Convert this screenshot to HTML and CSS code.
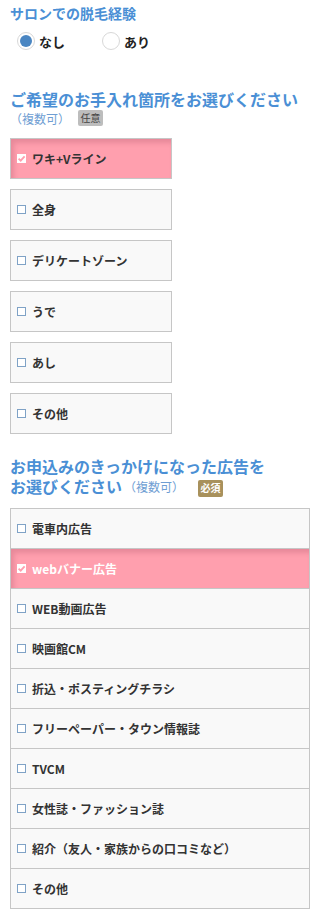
FILE: index.html
```html
<!DOCTYPE html>
<html lang="ja">
<head>
<meta charset="utf-8">
<title>form</title>
<link rel="stylesheet" href="styles.css">
</head>
<body>
<div class="page">
  <h2 class="q-title">サロンでの脱毛経験</h2>
  <div class="radios">
    <label class="radio"><span class="rcircle on"></span><span>なし</span></label>
    <label class="radio"><span class="rcircle"></span><span>あり</span></label>
  </div>

  <h2 class="big-title">ご希望のお手入れ箇所をお選びください</h2>
  <div class="sub-line"><span class="multi">（複数可）</span><span class="badge opt">任意</span></div>

  <ul class="boxes">
    <li class="box checked"><span class="cb on"><svg viewBox="0 0 9 9" width="9" height="9"><path d="M1.6 4.6 L3.7 6.6 L7.6 2.3" fill="none" stroke="#ff9fae" stroke-width="1.8"/></svg></span>ワキ+Vライン</li>
    <li class="box"><span class="cb"></span>全身</li>
    <li class="box"><span class="cb"></span>デリケートゾーン</li>
    <li class="box"><span class="cb"></span>うで</li>
    <li class="box"><span class="cb"></span>あし</li>
    <li class="box"><span class="cb"></span>その他</li>
  </ul>

  <h2 class="big-title two"><span class="tl">お申込みのきっかけになった広告を</span><span class="tl">お選びください<span class="multi inline">（複数可）</span><span class="badge req">必須</span></span></h2>

  <ul class="rows">
    <li class="row"><span class="cb"></span>電車内広告</li>
    <li class="row checked"><span class="cb on"><svg viewBox="0 0 9 9" width="9" height="9"><path d="M1.6 4.6 L3.7 6.6 L7.6 2.3" fill="none" stroke="#ff9fae" stroke-width="1.8"/></svg></span>webバナー広告</li>
    <li class="row"><span class="cb"></span>WEB動画広告</li>
    <li class="row"><span class="cb"></span>映画館CM</li>
    <li class="row"><span class="cb"></span>折込・ポスティングチラシ</li>
    <li class="row"><span class="cb"></span>フリーペーパー・タウン情報誌</li>
    <li class="row"><span class="cb"></span>TVCM</li>
    <li class="row"><span class="cb"></span>女性誌・ファッション誌</li>
    <li class="row"><span class="cb"></span>紹介（友人・家族からの口コミなど）</li>
    <li class="row"><span class="cb"></span>その他</li>
  </ul>
</div>
</body>
</html>
```
FILE: styles.css
```css
html, body {
  margin: 0;
  padding: 0;
  background: #fff;
}
body {
  font-family: "Noto Sans CJK JP", "Noto Sans", "Liberation Sans", sans-serif;
  color: #333;
}
.page {
  padding: 3px 10px 0 10px;
}
.q-title {
  margin: 0;
  font-size: 14px;
  line-height: 20px;
  font-weight: 700;
  color: #4a8fd5;
}
.radios {
  display: flex;
  align-items: center;
  height: 28px;
  margin-top: 4px;
  padding-left: 7px;
}
.radio {
  display: flex;
  align-items: center;
  gap: 4px;
  font-size: 13px;
  font-weight: 700;
  color: #222;
  width: 85px;
}
.rcircle {
  width: 18px;
  height: 18px;
  border-radius: 50%;
  border: 1px solid #d8d8d8;
  box-sizing: border-box;
  background: #fff;
  position: relative;
}
.rcircle.on::after {
  content: "";
  position: absolute;
  left: 2px;
  top: 2px;
  width: 12px;
  height: 12px;
  border-radius: 50%;
  background: #4a86c2;
}
.big-title {
  margin: 34px 0 0 0;
  font-size: 16px;
  line-height: 20px;
  font-weight: 700;
  color: #4a8fd5;
}
.sub-line {
  display: flex;
  align-items: center;
  height: 20px;
  margin-top: -1px;
}
.multi {
  font-size: 12px;
  font-weight: 400;
  color: #6f9ed3;
}
.badge {
  display: inline-flex;
  align-items: center;
  justify-content: center;
  width: 25px;
  height: 16px;
  border-radius: 2px;
  font-size: 10px;
  font-weight: 400;
  line-height: 1;
}
.badge.opt {
  background: #bdbdbd;
  color: #444;
  margin-left: 8px;
}
.boxes {
  list-style: none;
  margin: 10px 0 0 0;
  padding: 0;
}
.box {
  width: 162px;
  height: 41px;
  box-sizing: border-box;
  border: 1px solid #c6c6c6;
  background: #f9f9f9;
  margin-bottom: 10px;
  display: flex;
  align-items: center;
  padding-left: 6px;
  font-size: 12px;
  font-weight: 700;
  color: #333;
}
.box.checked {
  background: #ff9fae;
  box-shadow: inset 3px 4px 5px rgba(120, 40, 60, 0.18);
  color: #333;
}
.cb {
  width: 9px;
  height: 9px;
  box-sizing: border-box;
  border: 1px solid #7fa2c6;
  background: #fff;
  margin-right: 6px;
  flex: none;
  display: flex;
}
.cb.on {
  border: none;
  background: #fff;
}
.cb svg {
  display: block;
}
.big-title.two {
  margin-top: 22px;
}
.tl {
  display: flex;
  align-items: center;
  height: 20px;
}
.multi.inline {
  margin-left: 2px;
  margin-top: 2px;
}
.badge.req {
  background: #a8915c;
  color: #fff;
  height: 17px;
  margin-left: 14px;
  margin-top: 4px;
  font-weight: 700;
}
.rows {
  list-style: none;
  margin: 12px 0 0 0;
  padding: 0;
  border: 1px solid #c6c6c6;
  border-bottom: none;
  width: 300px;
  box-sizing: border-box;
}
.row {
  height: 40px;
  box-sizing: border-box;
  border-bottom: 1px solid #c6c6c6;
  background: #f9f9f9;
  display: flex;
  align-items: center;
  padding-left: 6px;
  font-size: 12px;
  font-weight: 700;
  color: #333;
}
.row.checked {
  background: #ff9fae;
  box-shadow: inset 3px 4px 5px rgba(120, 40, 60, 0.18);
  color: #fff;
}
```
